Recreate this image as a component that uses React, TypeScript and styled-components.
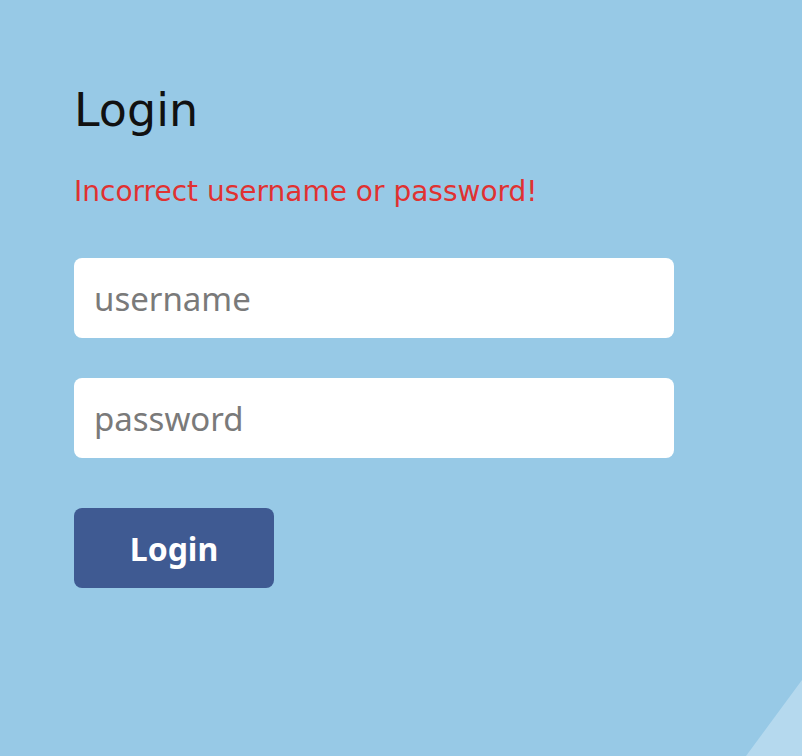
import styled, { createGlobalStyle } from "styled-components";

const GlobalStyle = createGlobalStyle`
  html, body {
    margin: 0;
    padding: 0;
    background: #97c9e6;
    height: 100%;
  }
  #root {
    min-height: 100vh;
  }
`;

const Page = styled.main`
  min-height: 100vh;
  box-sizing: border-box;
  padding: 78px 0 0 74px;
  overflow: hidden;
`;

const Corner = styled.div`
  position: fixed;
  right: 0;
  bottom: 0;
  width: 56px;
  height: 76px;
  background: #b5d9ee;
  clip-path: polygon(100% 0, 100% 100%, 0 100%);
`;

const Form = styled.form`
  display: flex;
  flex-direction: column;
  width: 600px;
`;

const Title = styled.h1`
  margin: 0;
  font-family: "DejaVu Sans", sans-serif;
  font-weight: 400;
  font-size: 46px;
  line-height: 64px;
  color: #111;
`;

const ErrorText = styled.p`
  margin: 32px 0 48px;
  font-family: "DejaVu Sans", sans-serif;
  font-size: 28px;
  line-height: 36px;
  color: #e03131;
`;

const Field = styled.input`
  box-sizing: border-box;
  width: 600px;
  height: 80px;
  margin-bottom: 40px;
  padding: 0 20px;
  border: none;
  border-radius: 8px;
  background: #fff;
  font-family: "Noto Sans", sans-serif;
  font-size: 33px;
  color: #333;
  outline: none;

  &::placeholder {
    color: #7a7a7a;
  }
`;

const Submit = styled.button`
  width: 200px;
  height: 80px;
  margin-top: 10px;
  border: none;
  border-radius: 8px;
  background: #3f5a92;
  color: #fff;
  font-family: "Noto Sans", sans-serif;
  font-weight: 700;
  font-size: 32px;
  cursor: pointer;
`;

export default function App() {
  return (
    <>
      <GlobalStyle />
      <Page>
        <Form onSubmit={(e) => e.preventDefault()}>
          <Title>Login</Title>
          <ErrorText>Incorrect username or password!</ErrorText>
          <Field type="text" placeholder="username" />
          <Field type="password" placeholder="password" />
          <Submit type="submit">Login</Submit>
        </Form>
      </Page>
      <Corner />
    </>
  );
}
